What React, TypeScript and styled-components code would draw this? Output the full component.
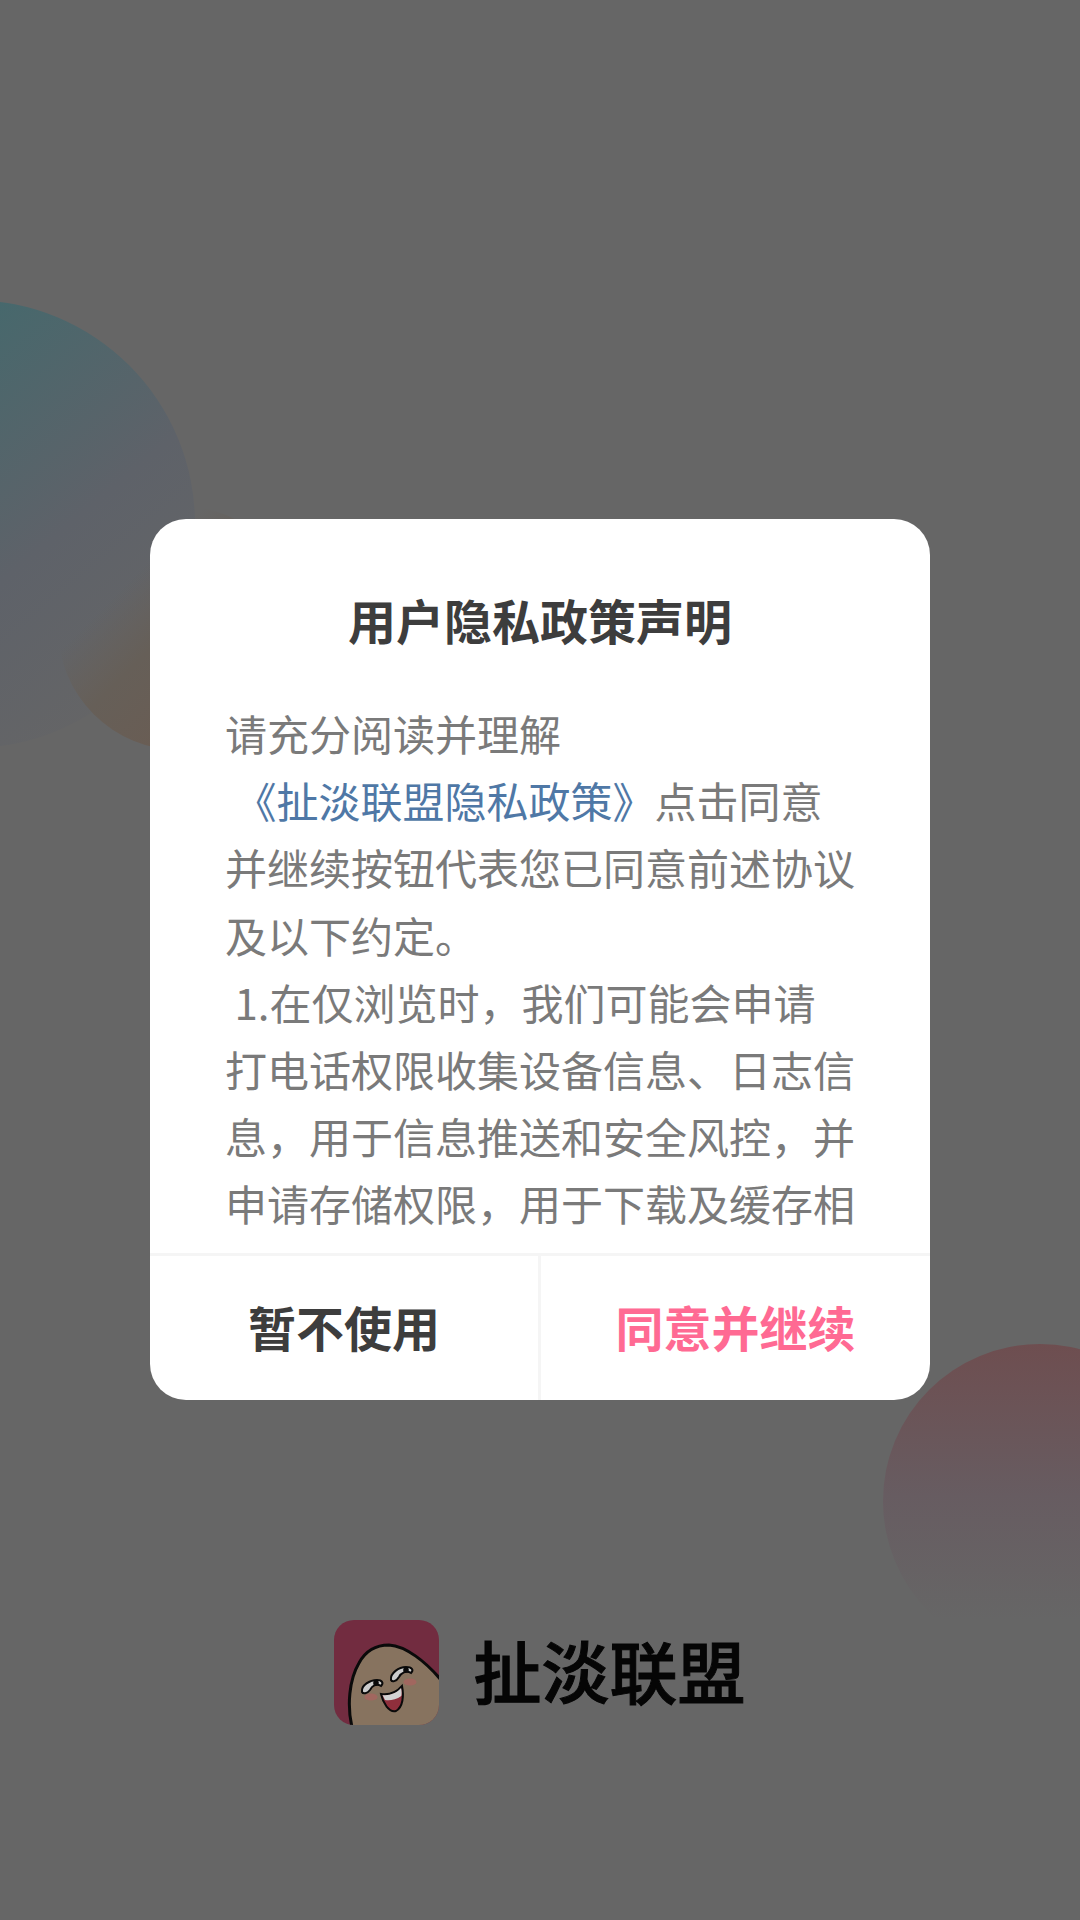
import styled, { createGlobalStyle } from "styled-components";

const GlobalStyle = createGlobalStyle`
  html, body {
    margin: 0;
    padding: 0;
    background: #666666;
  }
`;

const Screen = styled.div`
  position: relative;
  width: 1080px;
  height: 1920px;
  overflow: hidden;
  background: #666666;
  display: grid;
  grid-template-rows: 519px 881px 1fr;
  justify-items: center;
  font-family: "Noto Sans CJK SC", "Noto Sans", sans-serif;
`;

const Blob = styled.div<{ $x: number; $y: number; $r: number; $fill: string }>`
  position: absolute;
  left: ${({ $x, $r }) => $x - $r}px;
  top: ${({ $y, $r }) => $y - $r}px;
  width: ${({ $r }) => $r * 2}px;
  height: ${({ $r }) => $r * 2}px;
  border-radius: 50%;
  background: ${({ $fill }) => $fill};
`;

const Dialog = styled.section`
  grid-row: 2;
  position: relative;
  width: 780px;
  height: 881px;
  background: #ffffff;
  border-radius: 36px;
  overflow: hidden;
  display: flex;
  flex-direction: column;
`;

const Title = styled.h1`
  margin: 0;
  padding-top: 69px;
  height: 62px;
  flex: none;
  font-size: 48px;
  line-height: 62px;
  font-weight: 700;
  color: #3d3d3d;
  text-align: center;
`;

const Body = styled.div`
  flex: 1;
  min-height: 0;
  overflow: hidden;
  margin-top: 49px;
  padding: 0 75px;
  font-size: 42px;
  line-height: 67.2px;
  color: #7a7a7a;
`;

const PolicyLink = styled.span`
  color: #4f78a6;
`;

const Actions = styled.div`
  flex: none;
  height: 144px;
  display: grid;
  grid-template-columns: 388px 1fr;
  border-top: 3px solid #f5f5f5;
`;

const ActionButton = styled.button<{ $primary?: boolean }>`
  border: 0;
  padding: 0 0 5px;
  background: transparent;
  font-family: inherit;
  font-size: 48px;
  font-weight: 700;
  color: ${({ $primary }) => ($primary ? "#ff6a93" : "#3d3d3d")};
  & + & {
    border-left: 3px solid #f5f5f5;
  }
`;

const Brand = styled.div`
  grid-row: 3;
  display: flex;
  align-items: flex-start;
  gap: 34px;
  padding-top: 220px;
`;

const BrandName = styled.span`
  font-size: 68px;
  line-height: 100px;
  font-weight: 500;
  color: #050505;
  -webkit-text-stroke: 1px #050505;
`;

const LogoMark = () => (
  <svg width="105" height="105" viewBox="0 0 105 105">
    <defs>
      <clipPath id="logo-clip">
        <rect width="105" height="105" rx="20" />
      </clipPath>
    </defs>
    <g clipPath="url(#logo-clip)">
      <rect width="105" height="105" fill="#722c40" />
      <path
        d="M18 107C13 86 15 60 25 43C32 30 43 25 55 25C72 26 92 42 107 60V107Z"
        fill="#87735f"
        stroke="#0a0a0a"
        strokeWidth="3"
      />
      <ellipse cx="37" cy="77" rx="6.5" ry="3.6" fill="#a8645f" opacity="0.8" />
      <ellipse cx="76" cy="62" rx="6.5" ry="3.6" fill="#a8645f" opacity="0.8" />
      <path
        d="M28 72C27 65 36 60 43 60C48 60 50 63 47 66C42 63 38 66 36 70C33 74 29 74 28 72Z"
        fill="#cccccc"
        stroke="#0a0a0a"
        strokeWidth="2"
      />
      <circle cx="42" cy="63" r="2.8" fill="#0a0a0a" />
      <path
        d="M57 60C56 53 65 47 72 47C78 47 80 50 77 53C72 50 67 53 65 57C62 62 58 62 57 60Z"
        fill="#cccccc"
        stroke="#0a0a0a"
        strokeWidth="2"
      />
      <circle cx="72" cy="50" r="2.8" fill="#0a0a0a" />
      <path
        d="M47 74C55 75 63 72 68 66C70 76 69 87 62 91C55 93 49 83 47 74Z"
        fill="#8f2f3c"
        stroke="#0a0a0a"
        strokeWidth="2"
      />
      <path d="M48.5 75C55 76 63 73 67 68C67.8 71 67.8 74 67.3 76C62 80 55 81 51 80Z" fill="#d2d2d2" />
    </g>
  </svg>
);

export default function App() {
  return (
    <Screen>
      <GlobalStyle />
      <Blob
        $x={-29}
        $y={524}
        $r={224}
        $fill="linear-gradient(140deg, #3c6b6e 10%, #5e6269 60%, #656566 88%)"
      />
      <Blob
        $x={180}
        $y={628}
        $r={122}
        $fill="linear-gradient(135deg, rgba(102,100,96,0) 30%, #665f58 48%, #6b5c52 80%)"
      />
      <Blob
        $x={1040}
        $y={1501}
        $r={157}
        $fill="linear-gradient(180deg, #6e4e50 0%, #675c61 48%, rgba(102,102,102,0) 88%)"
      />
      <Dialog>
        <Title>用户隐私政策声明</Title>
        <Body>
          请充分阅读并理解
          <br />
          &nbsp;<PolicyLink>《扯淡联盟隐私政策》</PolicyLink>点击同意并继续按钮代表您已同意前述协议及以下约定。
          <br />
          &nbsp;1.在仅浏览时，我们可能会申请打电话权限收集设备信息、日志信息，用于信息推送和安全风控，并申请存储权限，用于下载及缓存相
        </Body>
        <Actions>
          <ActionButton>暂不使用</ActionButton>
          <ActionButton $primary>同意并继续</ActionButton>
        </Actions>
      </Dialog>
      <Brand>
        <LogoMark />
        <BrandName>扯淡联盟</BrandName>
      </Brand>
    </Screen>
  );
}
